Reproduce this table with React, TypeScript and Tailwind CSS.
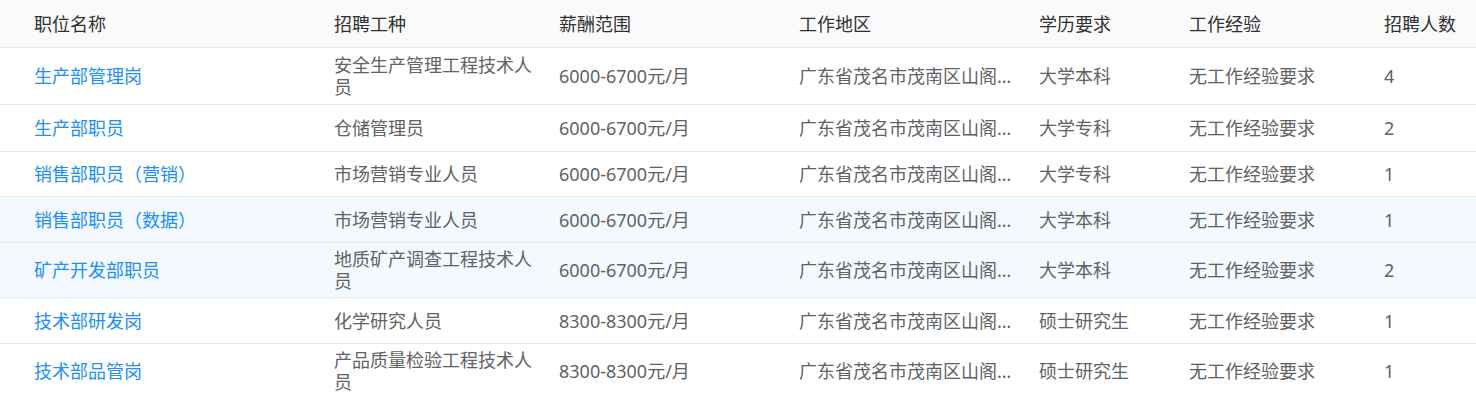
import React from 'react';

type Job = {
  name: string;
  type: string;
  salary: string;
  area: string;
  edu: string;
  exp: string;
  count: number;
  h: string;
  active?: boolean;
};

const jobs: Job[] = [
  { name: '生产部管理岗', type: '安全生产管理工程技术人员', salary: '6000-6700元/月', area: '广东省茂名市茂南区山阁镇工业园', edu: '大学本科', exp: '无工作经验要求', count: 4, h: 'h-[57px]' },
  { name: '生产部职员', type: '仓储管理员', salary: '6000-6700元/月', area: '广东省茂名市茂南区山阁镇工业园', edu: '大学专科', exp: '无工作经验要求', count: 2, h: 'h-[47px]' },
  { name: '销售部职员（营销）', type: '市场营销专业人员', salary: '6000-6700元/月', area: '广东省茂名市茂南区山阁镇工业园', edu: '大学专科', exp: '无工作经验要求', count: 1, h: 'h-[45px]' },
  { name: '销售部职员（数据）', type: '市场营销专业人员', salary: '6000-6700元/月', area: '广东省茂名市茂南区山阁镇工业园', edu: '大学本科', exp: '无工作经验要求', count: 1, h: 'h-[46px]', active: true },
  { name: '矿产开发部职员', type: '地质矿产调查工程技术人员', salary: '6000-6700元/月', area: '广东省茂名市茂南区山阁镇工业园', edu: '大学本科', exp: '无工作经验要求', count: 2, h: 'h-[55px]', active: true },
  { name: '技术部研发岗', type: '化学研究人员', salary: '8300-8300元/月', area: '广东省茂名市茂南区山阁镇工业园', edu: '硕士研究生', exp: '无工作经验要求', count: 1, h: 'h-[46px]' },
  { name: '技术部品管岗', type: '产品质量检验工程技术人员', salary: '8300-8300元/月', area: '广东省茂名市茂南区山阁镇工业园', edu: '硕士研究生', exp: '无工作经验要求', count: 1, h: 'h-[55px]' },
];

const cols = 'grid grid-cols-[334px_225px_240px_240px_150px_195px_1fr] items-center';

export default function App() {
  return (
    <div
      className="w-[1476px] h-[395px] overflow-hidden bg-white text-[18px] leading-[22px]"
      style={{ fontFamily: '"Noto Sans", "Noto Sans CJK SC", sans-serif' }}
    >
      {/* header */}
      <div className={`${cols} h-[48px] bg-[#fafafa] border-b border-[#e8e8e8] text-[#303133]`}>
        <div className="pl-[34px]">职位名称</div>
        <div>招聘工种</div>
        <div>薪酬范围</div>
        <div>工作地区</div>
        <div>学历要求</div>
        <div>工作经验</div>
        <div>招聘人数</div>
      </div>

      {jobs.map((job, i) => (
        <div
          key={i}
          className={`${cols} ${job.h} border-b border-[#e8e8e8] text-[#606266] ${job.active ? 'bg-[#f3f9fe]' : 'bg-white'}`}
        >
          <div className="pl-[34px] text-[#2190f5]">{job.name}</div>
          <div className="max-w-[205px]">{job.type}</div>
          <div>{job.salary}</div>
          <div className="w-[218px] truncate">{job.area}</div>
          <div>{job.edu}</div>
          <div>{job.exp}</div>
          <div>{job.count}</div>
        </div>
      ))}
    </div>
  );
}
